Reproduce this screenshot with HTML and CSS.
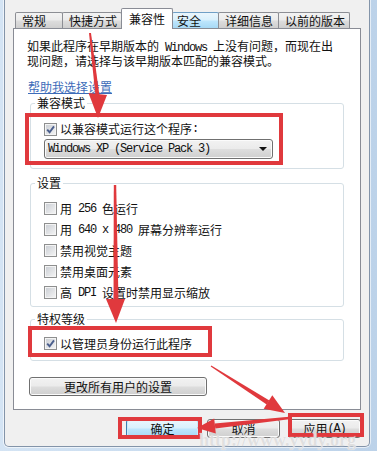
FILE: index.html
```html
<!DOCTYPE html>
<html lang="zh-CN">
<head>
<meta charset="utf-8">
<title>属性 - 兼容性</title>
<link rel="stylesheet" href="styles.css">
</head>
<body>
<div class="screen">
  <div class="window">
    <div class="tabs">
      <div class="tab t1">常规</div>
      <div class="tab t2">快捷方式</div>
      <div class="tab t3 sel">兼容性</div>
      <div class="tab t4 hot">安全</div>
      <div class="tab t5">详细信息</div>
      <div class="tab t6">以前的版本</div>
    </div>
    <div class="panel">
      <p class="intro">如果此程序在早期版本的<span class="m"> Windows </span>上没有问题，而现在出<br>现问题，请选择与该早期版本匹配的兼容模式。</p>
      <div class="linkrow"><a class="link" href="#">帮助我选择设置</a></div>

      <fieldset class="group g1">
        <legend>兼容模式</legend>
        <div class="gbody">
          <div class="row"><span class="cb"><svg viewBox="0 0 11 11" width="11" height="11"><path d="M2.2 5.6 L4.6 8.2 L9 2.4" fill="none" stroke="#4b5f8d" stroke-width="1.9"/></svg></span>以兼容模式运行这个程序<span class="m">:</span></div>
          <div class="combo"><span class="m">Windows XP (Service Pack 3)</span><span class="caret"></span></div>
        </div>
      </fieldset>

      <fieldset class="group g2">
        <legend>设置</legend>
        <div class="gbody">
          <div class="row tall"><span class="cb off"></span>用<span class="m"> 256 </span>色运行</div>
          <div class="row tall"><span class="cb off"></span>用<span class="m"> 640 x 480 </span>屏幕分辨率运行</div>
          <div class="row tall"><span class="cb off"></span>禁用视觉主题</div>
          <div class="row tall"><span class="cb off"></span>禁用桌面元素</div>
          <div class="row tall"><span class="cb off"></span>高<span class="m"> DPI </span>设置时禁用显示缩放</div>
        </div>
      </fieldset>

      <fieldset class="group g3">
        <legend>特权等级</legend>
        <div class="gbody">
          <div class="row tall"><span class="cb"><svg viewBox="0 0 11 11" width="11" height="11"><path d="M2.2 5.6 L4.6 8.2 L9 2.4" fill="none" stroke="#4b5f8d" stroke-width="1.9"/></svg></span>以管理员身份运行此程序</div>
        </div>
      </fieldset>

      <div class="btn wide">更改所有用户的设置</div>
    </div>
    <div class="actions">
      <div class="btn default">确定</div>
      <div class="btn">取消</div>
      <div class="btn">应用<span class="m">(A)</span></div>
    </div>
  </div>

  <svg class="marks" width="377" height="451" viewBox="0 0 377 451">
    <g fill="none" stroke="#e0393d" stroke-width="4">
      <rect x="27" y="115" width="254" height="48"/>
      <rect x="30" y="328" width="180" height="27"/>
      <rect x="120" y="419" width="80" height="18"/>
      <rect x="290" y="415" width="72" height="20"/>
    </g>
    <g fill="#e0393d">
      <polygon points="89,33 91,33 99.5,96 95.5,96"/>
      <polygon points="88.5,93 107,95 98,118"/>
      <polygon points="113.8,185 116.2,185 118.5,302 113.5,302"/>
      <polygon points="106,299 125,299 116,323"/>
      <polygon points="210.7,366.4 211.3,365.6 269.4,400.4 266.7,404.6"/>
      <polygon points="263.7,408.7 272.3,395.3 285,413"/>
      <polygon points="289.1,419.2 288.9,416.8 214.7,423.5 215.3,428.5"/>
      <polygon points="214.2,418.5 215.8,433.5 197,428"/>
    </g>
  </svg>
  <div class="watermark">http://www.yydy.org</div>
</div>
</body>
</html>
```
FILE: styles.css
```css
* { box-sizing: border-box; }
html, body { margin: 0; padding: 0; }
body {
  width: 377px;
  height: 451px;
  overflow: hidden;
  background: linear-gradient(90deg, #d4e4f4, #bcd2e9);
  font-family: "Noto Sans CJK SC", "Noto Sans", sans-serif;
  font-size: 12px;
  color: #111;
}
.screen { position: relative; width: 377px; height: 451px; }

.window {
  margin: 0 7px 0 4px;
  height: 447px;
  background: #f0f0f0;
  border: 1px solid #8394a9;
  border-top: 0;
  border-radius: 0 0 5px 5px;
  box-shadow: 0 0 0 1px rgba(255,255,255,0.6);
  padding: 8px 8px 0;
}

/* tabs */
.tabs {
  display: flex;
  align-items: flex-end;
  height: 20px;
  padding-left: 2px;
  position: relative;
  z-index: 1;
}
.tab {
  height: 16px;
  border: 1px solid #8c8e94;
  border-bottom: 0;
  margin-right: -1px;
  padding-left: 6px;
  line-height: 15px;
  white-space: nowrap;
  background: linear-gradient(#f3f3f3, #ebebeb 48%, #dddddd 52%, #cfcfcf);
  border-radius: 2px 2px 0 0;
}
.t1 { width: 48px; }
.t2 { width: 60px; }
.t3 { width: 52px; }
.t4 { width: 47px; padding-left: 4px; }
.t5 { width: 61px; }
.t6 { width: 72px; }
.tab.sel {
  height: 21px;
  margin-bottom: -1px;
  padding-top: 2px;
  padding-left: 7px;
  background: #fff;
  border-color: #898c95;
  position: relative;
  z-index: 2;
}
.tab.hot {
  border-color: #6f9fc6;
  background: linear-gradient(#eaf6fd, #d9f0fc 48%, #bee6fd 52%, #a7d9f5);
}

/* panel */
.panel {
  height: 382px;
  background: #fff;
  border: 1px solid #898c95;
  padding-top: 10px;
}
.intro {
  margin: 0 0 0 13px;
  line-height: 14px;
}
.linkrow {
  margin-top: 12px;
  padding-left: 14px;
  line-height: 14px;
}
.link { color: #3d6cb9; text-decoration: underline; }

.m {
  font-family: "Liberation Mono", monospace;
  font-size: 12px;
  letter-spacing: -1.2px;
  line-height: 1;
}

/* group boxes */
.group {
  margin: 0 16px;
  padding: 0;
  border: 1px solid #d5dfe5;
  border-radius: 3px;
  min-width: 0;
}
.group legend {
  margin-left: 4px;
  padding: 0 2px;
  line-height: 12px;
}
.gbody { padding-left: 13px; }
.g1 { margin-top: 3px; }
.g1 .gbody { padding-top: 13px; padding-bottom: 9px; }
.g2 { margin-top: 8px; }
.g2 .gbody { padding-top: 9px; padding-bottom: 3px; }
.g3 { margin-top: 6px; }
.g3 .gbody { padding-top: 8px; padding-bottom: 6px; }

.row {
  display: flex;
  align-items: center;
  height: 14px;
  line-height: 14px;
  white-space: pre;
}
.row.tall { height: 21px; line-height: 21px; }

.cb {
  flex: none;
  width: 13px;
  height: 13px;
  margin-right: 3px;
  border: 1px solid #8e8f8f;
  background: linear-gradient(135deg, #c8ccd2, #f6f6f6);
  box-shadow: inset 0 0 0 1px #f4f4f4;
}
.cb svg { display: block; }

.combo {
  display: flex;
  align-items: center;
  width: 229px;
  height: 20px;
  margin-top: 3px;
  padding-left: 3px;
  border: 1px solid #707070;
  border-radius: 3px;
  background: linear-gradient(#f2f2f2, #ebebeb 48%, #dddddd 52%, #cfcfcf);
  box-shadow: inset 0 0 0 1px #fbfbfb;
  white-space: pre;
}
.caret {
  margin-left: auto;
  margin-right: 5px;
  width: 0;
  height: 0;
  border-left: 4px solid transparent;
  border-right: 4px solid transparent;
  border-top: 4px solid #111;
}

/* buttons */
.btn {
  display: flex;
  align-items: center;
  justify-content: center;
  width: 73px;
  height: 19px;
  border: 1px solid #707070;
  border-radius: 3px;
  background: linear-gradient(#f2f2f2, #ebebeb 48%, #dddddd 52%, #cfcfcf);
  box-shadow: inset 0 0 0 1px #fbfbfb;
  white-space: pre;
}
.btn.wide { width: 178px; margin: 16px 0 0 15px; }
.btn.default {
  border-color: #3c7fb1;
  background: linear-gradient(#eaf6fd, #d9f0fc 48%, #bee6fd 52%, #a7d9f5);
  box-shadow: inset 0 0 0 1px #c9ebfb;
}
.actions {
  display: flex;
  justify-content: flex-end;
  gap: 8px;
  margin-top: 9px;
}

/* annotations */
.marks { position: absolute; left: 0; top: 0; pointer-events: none; }
.watermark {
  position: absolute;
  left: 199px;
  top: 430px;
  font-family: "Liberation Serif", serif;
  font-weight: bold;
  font-size: 18px;
  line-height: 20px;
  color: rgba(210, 210, 210, 0.7);
  text-shadow: 0 0 1px #fff;
  white-space: nowrap;
}
```
